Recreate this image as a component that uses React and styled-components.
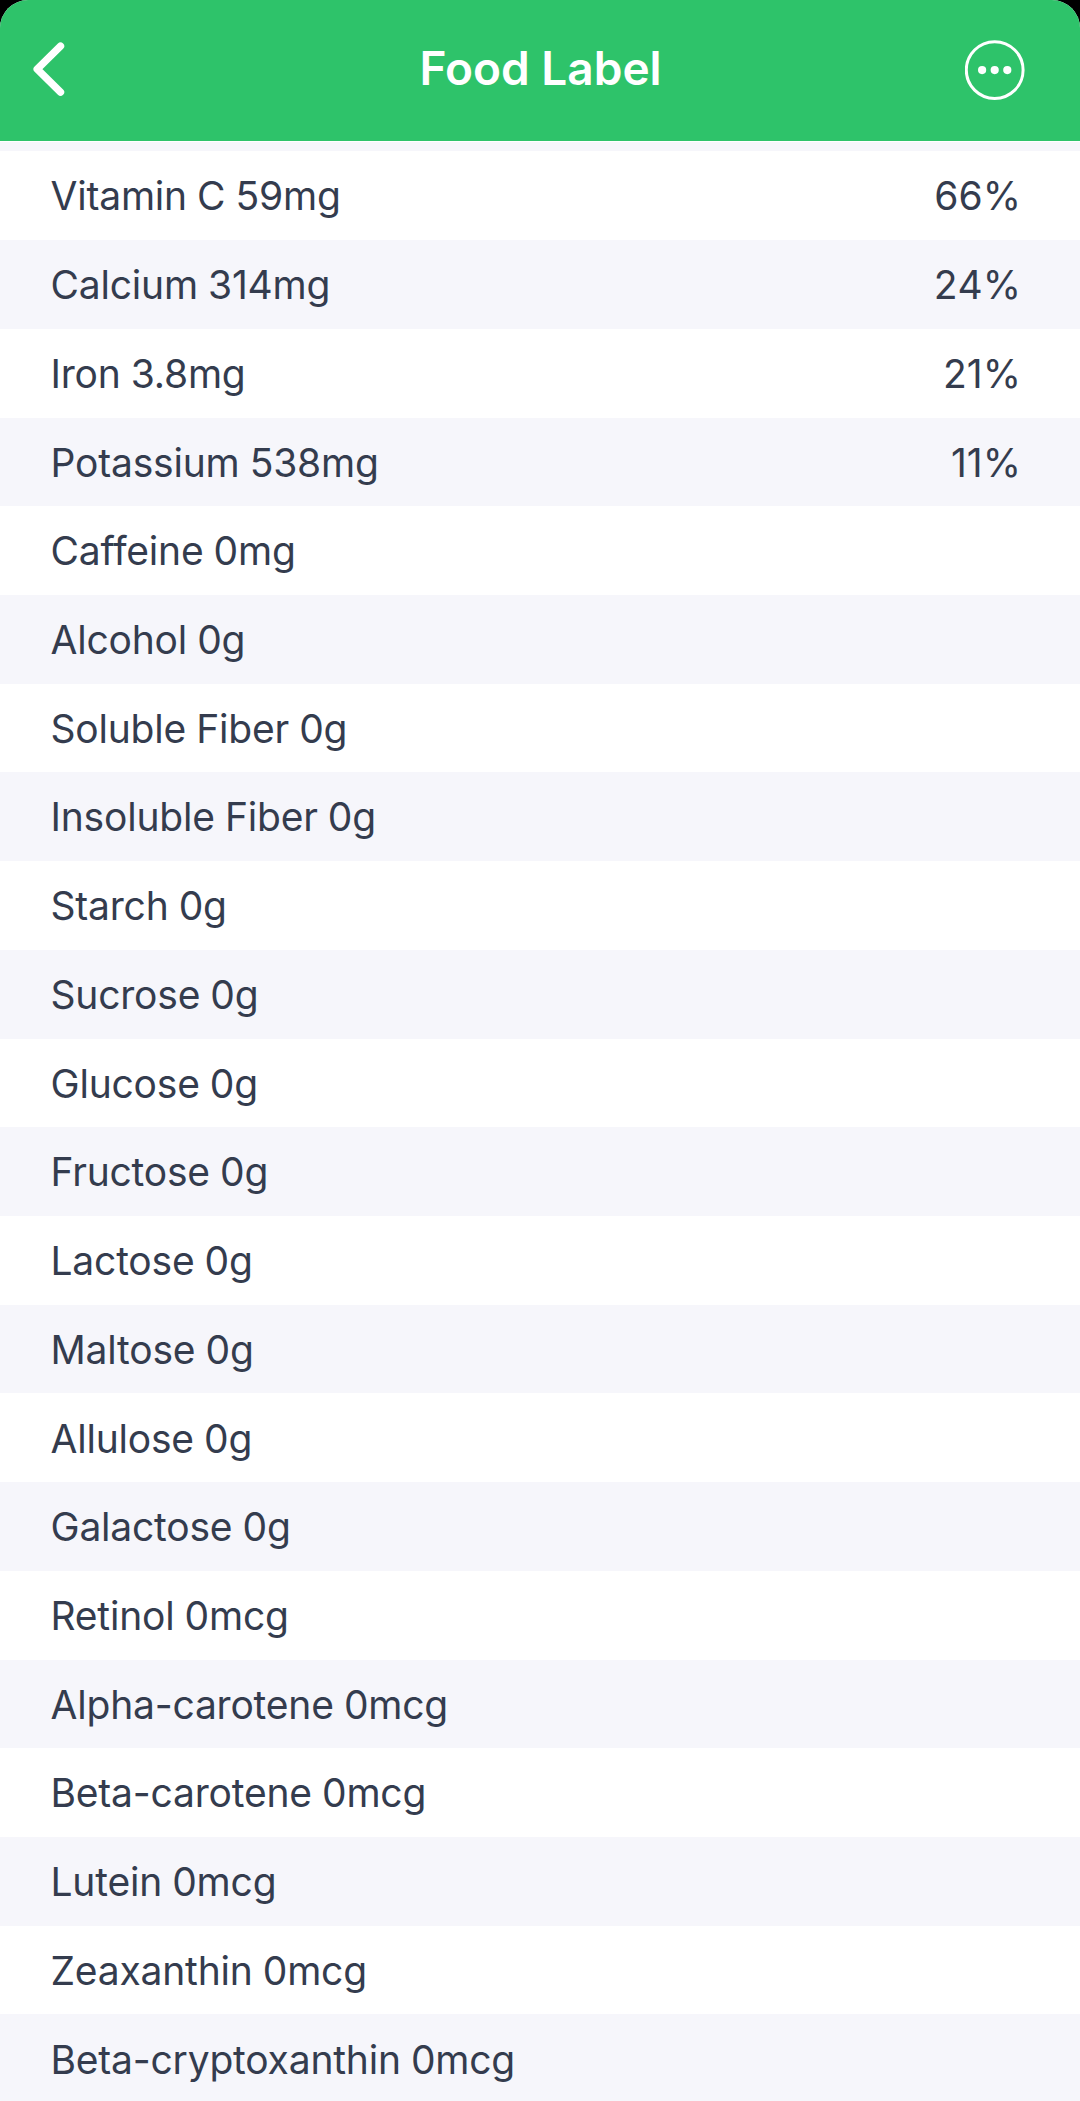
import React from "react"
import styled, { createGlobalStyle } from "styled-components"

const nutrients = [
  { label: "Vitamin C 59mg", daily: "66%" },
  { label: "Calcium 314mg", daily: "24%" },
  { label: "Iron 3.8mg", daily: "21%" },
  { label: "Potassium 538mg", daily: "11%" },
  { label: "Caffeine 0mg" },
  { label: "Alcohol 0g" },
  { label: "Soluble Fiber 0g" },
  { label: "Insoluble Fiber 0g" },
  { label: "Starch 0g" },
  { label: "Sucrose 0g" },
  { label: "Glucose 0g" },
  { label: "Fructose 0g" },
  { label: "Lactose 0g" },
  { label: "Maltose 0g" },
  { label: "Allulose 0g" },
  { label: "Galactose 0g" },
  { label: "Retinol 0mcg" },
  { label: "Alpha-carotene 0mcg" },
  { label: "Beta-carotene 0mcg" },
  { label: "Lutein 0mcg" },
  { label: "Zeaxanthin 0mcg" },
  { label: "Beta-cryptoxanthin 0mcg" },
]

function App() {
  return (
    <Screen>
      <GlobalStyle />
      <Header>
        <IconButton aria-label="Back">
          <svg width="36" height="60" viewBox="0 0 36 60" fill="none">
            <path
              d="M29.5 6.2 L6.2 29.2 L29.5 52.2"
              stroke="#fff"
              strokeWidth="7.4"
              strokeLinecap="round"
              strokeLinejoin="round"
            />
          </svg>
        </IconButton>
        <Title>Food Label</Title>
        <IconButton aria-label="More">
          <svg width="60" height="60" viewBox="0 0 60 60" fill="none">
            <circle cx="29.7" cy="30.1" r="28.4" stroke="#fff" strokeWidth="3" />
            <circle cx="17.1" cy="30.1" r="4.1" fill="#fff" />
            <circle cx="29.7" cy="30.1" r="4.1" fill="#fff" />
            <circle cx="42.3" cy="30.1" r="4.1" fill="#fff" />
          </svg>
        </IconButton>
      </Header>
      <List>
        {nutrients.map(({ label, daily }) => (
          <Row key={label}>
            <Label>{label}</Label>
            {daily && <Daily>{daily}</Daily>}
          </Row>
        ))}
      </List>
    </Screen>
  )
}

const GlobalStyle = createGlobalStyle`
  * {
    box-sizing: border-box;
  }

  body {
    margin: 0;
    background: #000;
    font-family: Inter, "Liberation Sans", sans-serif;
  }
`

const Screen = styled.div`
  width: 1080px;
  height: 2101px;
  overflow: hidden;
  background: #f6f6fb;
  border-radius: 28px 28px 0 0;
`

const Header = styled.header`
  display: grid;
  grid-template-columns: 60px 1fr 60px;
  align-items: center;
  height: 141px;
  padding: 0 55px 2px 31px;
  background: #2ec36a;
`

const IconButton = styled.button`
  display: flex;
  padding: 0;
  border: 0;
  background: none;
`

const Title = styled.h1`
  margin: 0;
  padding: 0 0 3px 25px;
  text-align: center;
  color: #fff;
  font-size: 46px;
  font-weight: 600;
  line-height: 60px;
`

const List = styled.ul`
  margin: 0;
  padding: 9.4px 0 0;
  border-top: 1px solid #fff;
  list-style: none;
`

const Row = styled.li`
  display: flex;
  justify-content: space-between;
  align-items: center;
  height: 88.72px;
  padding: 1.4px 59px 0 50.5px;
  color: #343c4e;
  font-size: 39px;
  line-height: 48px;
  white-space: nowrap;

  &:nth-child(odd) {
    background: #fff;
  }
`

const Label = styled.span`
  letter-spacing: -0.2px;
  word-spacing: -0.6px;
`

const Daily = styled.span`
  font-kerning: none;
`

export default App
